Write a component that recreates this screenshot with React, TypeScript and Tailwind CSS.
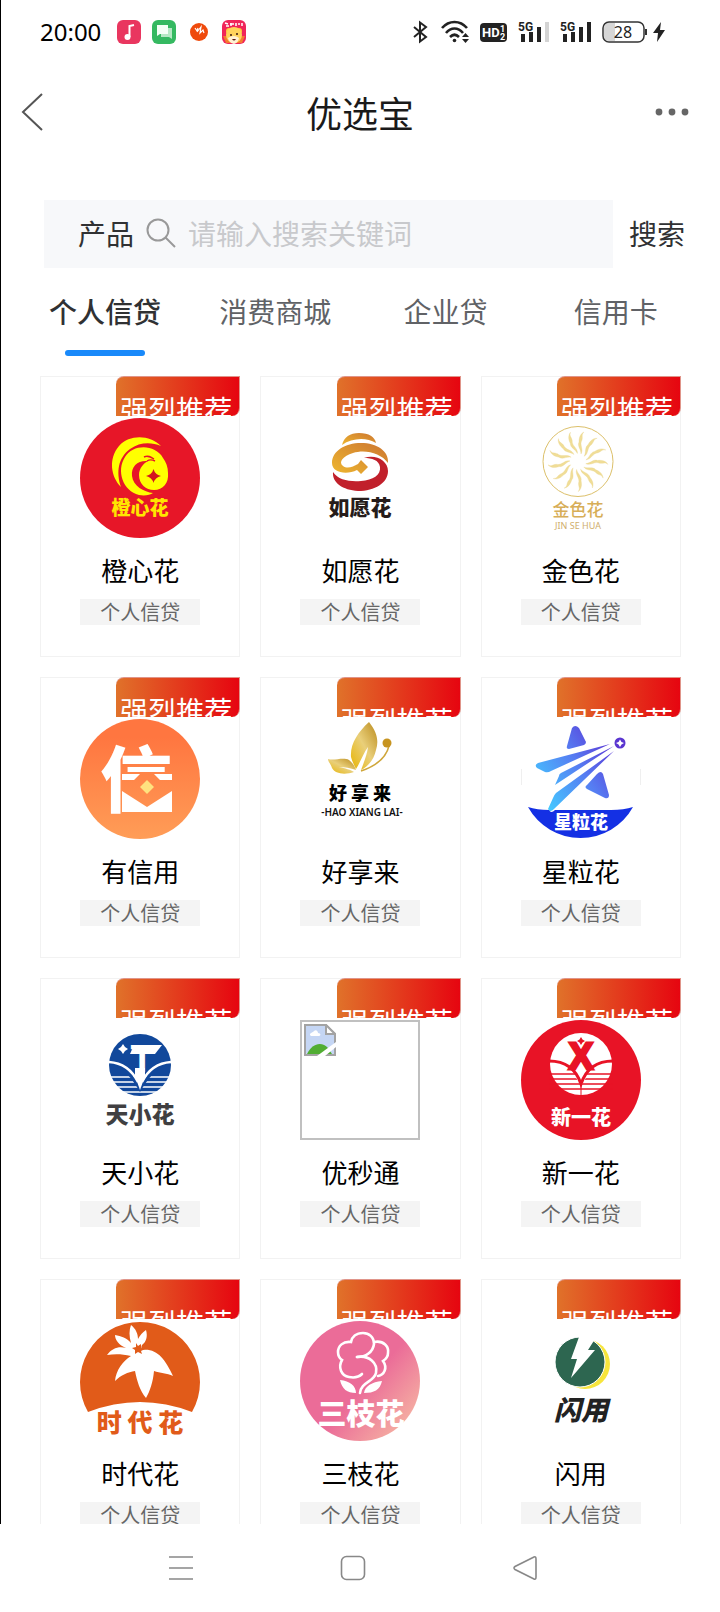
import type { ReactNode } from 'react'

const tabs = ['个人信贷', '消费商城', '企业贷', '信用卡']

const logoFont = 'font-["Noto_Sans_CJK_SC",sans-serif] font-black'

function Logo({ children }: { children: ReactNode }) {
  return (
    <svg viewBox="0 0 120 120" className="h-[120px] w-[120px]" aria-hidden="true">
      {children}
    </svg>
  )
}

function ChengxinLogo() {
  return (
    <Logo>
      <circle cx="60" cy="60" r="60" fill="#e71628" />
      <path d="M81 28C70 17 50 16 39 28C28 41 31 59 41 69C36 54 38 40 50 31C60 24 71 24 81 28Z" fill="#ff0" />
      <path d="M83 40C75 26 53 26 45 39C36 53 43 73 59 77C65 78 70 77 73 75C64 74 53 68 52 58C51 48 58 42 68 43C64 45 59 50 59 57C59 66 66 72 74 72C83 72 89 65 88 55C88 49 86 44 83 40Z" fill="#ff0" />
      <path d="M64 39C68 37 71 39 74 41M67 43C70 41 73 42 75 43" fill="none" stroke="#e71628" strokeWidth="1.4" />
      <path d="M73.500 51Q75 56.500 81 58Q75 59.500 73.500 65Q72 59.500 66 58Q72 56.500 73.500 51Z" fill="#d3161f" />
      <text x="60" y="97" textAnchor="middle" fontSize="19" fill="#ffe600" className={logoFont}>橙心花</text>
    </Logo>
  )
}

function RuyuanLogo() {
  return (
    <Logo>
      <defs>
        <linearGradient id="ruyuan-gold" x1="0" x2="1" y1="1" y2="0">
          <stop offset="0" stopColor="#eeb730" />
          <stop offset="1" stopColor="#cc7530" />
        </linearGradient>
      </defs>
      <path d="M42 27C44 19 50 15 59 15C69 15 75 19 76 25C66 19 52 20 42 27Z" fill="url(#ruyuan-gold)" />
      <path d="M88 45C81 35 65 31 53 35C43 38 38 44 43 48C47 51 53 49 58 46L61 42L68 49L61 56L57 52C47 57 32 55 32 45C32 33 45 25 61 25C77 25 89 33 88 45Z" fill="url(#ruyuan-gold)" />
      <path d="M33 54C38 62 50 64 61 63C73 62 81 57 80 49C79 42 72 40 64 40C76 36 88 43 88 53C88 65 75 73 58 73C43 72 32 65 33 54Z" fill="#c1202b" />
      <text x="60" y="97" textAnchor="middle" fontSize="21" fill="#261c1a" className={logoFont}>如愿花</text>
    </Logo>
  )
}

function JinseLogo() {
  const rays = [0, 28, 56, 84, 112, 140, 168, 196, 224, 252, 280, 308, 334]
  return (
    <Logo>
      <circle cx="57" cy="43.500" r="35" fill="none" stroke="#dcc06a" strokeWidth="1" />
      {rays.map((angle) => (
        <path
          key={angle}
          d="M60 36C63 31 58 27 61 22C62 18 60 17 63 14C59 16 58 20 58 24C56 28 60 31 60 36Z"
          transform={`rotate(${angle} 57 43.5)`}
          fill="#f0dd96"
          stroke="#e8d38c"
          strokeWidth="0.3"
        />
      ))}
      <text x="57" y="98" textAnchor="middle" fontSize="17" fill="#d7ae58" className="font-['Noto_Sans_CJK_SC',sans-serif] font-medium">金色花</text>
      <text x="57" y="111" textAnchor="middle" fontSize="9" fill="#cfae6c" className="font-['Noto_Sans',sans-serif]">JIN SE HUA</text>
    </Logo>
  )
}

function YouxinLogo() {
  return (
    <Logo>
      <defs>
        <linearGradient id="youxin" gradientUnits="userSpaceOnUse" x1="0" x2="0" y1="0" y2="120">
          <stop offset="0.15" stopColor="#ff7640" />
          <stop offset="1" stopColor="#ff9d57" />
        </linearGradient>
      </defs>
      <circle cx="60" cy="60" r="60" fill="url(#youxin)" />
      <text x="56" y="87" textAnchor="middle" fontSize="72" fill="#fff" className={logoFont}>信</text>
      <path d="M41 53H94V96H41Z" fill="url(#youxin)" />
      <path d="M42 55H60L54 61H42ZM74 55H92V61H80ZM42 72L67 88L92 72V93H42Z" fill="#fff" />
      <path d="M67 61L74 68L67 75L60 68Z" fill="#ffe27f" />
    </Logo>
  )
}

function HaoxiangLogo() {
  return (
    <Logo>
      <defs>
        <linearGradient id="haoxiang" x1="0" x2="1" y1="1" y2="0">
          <stop offset="0" stopColor="#e8b400" />
          <stop offset="0.5" stopColor="#e9cf7a" />
          <stop offset="1" stopColor="#b98a1c" />
        </linearGradient>
      </defs>
      <path d="M69 3C77 13 79 22 76 31C74 40 69 47 61 51C64 43 67 36 68 28C63 35 60 44 56 50C54 46 52 42 51 38C50 25 58 13 69 3Z" fill="url(#haoxiang)" />
      <path d="M28 40C34 42 43 38 49 41C53 44 55 48 56 51C51 49 44 48 39 48C45 49 51 51 54 53C45 56 35 55 32 49C31 45 28 43 28 40Z" fill="url(#haoxiang)" />
      <path d="M89 27C86 39 76 47 61 52" fill="none" stroke="#cfa63a" strokeWidth="1.5" />
      <circle cx="87" cy="24" r="4.500" fill="#c79420" />
      <text x="60" y="81" textAnchor="middle" fontSize="18" fill="#000" className={logoFont}>好 享 来</text>
      <text x="62" y="97" textAnchor="middle" fontSize="10" fill="#111" className="font-['Noto_Sans',sans-serif] font-semibold">-HAO XIANG LAI-</text>
    </Logo>
  )
}

function XingliLogo() {
  return (
    <Logo>
      <defs>
        <linearGradient id="xingli" gradientUnits="userSpaceOnUse" x1="18" x2="92" y1="75" y2="25">
          <stop offset="0" stopColor="#45c8ff" />
          <stop offset="0.55" stopColor="#567cf2" />
          <stop offset="1" stopColor="#5b35d4" />
        </linearGradient>
      </defs>
      <path d="M0.500 50V66M119.500 50V66" stroke="#e4e4e4" strokeWidth="0.6" />
      <g fill="url(#xingli)">
        <path d="M51 9Q54 5 58 9L65 23Q65 25 63 26L48 30Q45 30 46 27Z" />
        <path d="M89 25L17 44Q13 46 16 49L24 53Q27 54 30 52Z" />
        <path d="M93 27L40 54Q38 55 38 57L34 66Z" />
        <path d="M93 32L35 74Q33 76 32 79L27 90Q29 94 33 90Z" />
        <path d="M76 55Q80 51 82 55L88 76Q88 80 84 79L66 70Q63 68 66 66Z" />
      </g>
      <circle cx="99" cy="24" r="5.500" fill="#5a35d0" />
      <path d="M99 20.500L100.500 23L103 24L100.500 25.500L99 28L97.500 25.500L95 24L97.500 23Z" fill="#fff" />
      <path d="M7 88Q16 91 28 91Q30 95 34 91H90Q103 91 112 88A60 60 0 0 1 7 88Z" fill="#1430e4" />
      <text x="60" y="110" textAnchor="middle" fontSize="18" fill="#fff" className={logoFont}>星粒花</text>
    </Logo>
  )
}

function TianxiaoLogo() {
  return (
    <Logo>
      <circle cx="60" cy="45" r="31" fill="#11489b" />
      <path d="M28 57H92M28 62H92M28 67H92M28 72H92" stroke="#fff" strokeWidth="1.600" />
      <path d="M29 43C43 44 52 52 60 66C68 52 77 44 91 43C77 47 68 58 60 72C52 58 43 47 29 43Z" fill="#11489b" />
      <path d="M29 42C43 43 52 50 58 62M91 42C77 43 68 50 62 62" fill="none" stroke="#fff" strokeWidth="2.600" />
      <path d="M55 48H65V56L60 70L55 56Z" fill="#fff" />
      <path d="M54 25H82L75 34H50Z" fill="#fff" />
      <text x="62" y="52" textAnchor="middle" fontSize="38" fill="#fff" className="font-['Liberation_Sans',sans-serif] font-bold">T</text>
      <path d="M43 24L45 27L48 29L45 31L43 34L41 31L38 29L41 27Z" fill="#fff" />
      <text x="60" y="103" textAnchor="middle" fontSize="23" fill="#403f41" className={logoFont}>天小花</text>
    </Logo>
  )
}

function XinyiLogo() {
  return (
    <Logo>
      <circle cx="60" cy="60" r="60" fill="#e81326" />
      <circle cx="60" cy="44" r="31" fill="#fff" />
      <text x="60" y="49" textAnchor="middle" fontSize="36" fill="#e81326" stroke="#e81326" strokeWidth="3" className="font-['Liberation_Sans',sans-serif] font-bold">X</text>
      <path d="M28 54H92M28 59H92M28 64H92M28 69H92" stroke="#e81326" strokeWidth="1.600" />
      <path d="M54 56L60 46L66 56L60 66Z" fill="#fff" />
      <path d="M28 41C44 41 55 49 60 64C65 49 76 41 92 41" fill="none" stroke="#e81326" strokeWidth="3" />
      <path d="M60 62V76" stroke="#e81326" strokeWidth="1" />
      <path d="M60 17L61.500 19.500L64 21L61.500 22.500L60 25L58.500 22.500L56 21L58.500 19.500Z" fill="#e81326" />
      <text x="60" y="105" textAnchor="middle" fontSize="20" fill="#fff" className={logoFont}>新一花</text>
    </Logo>
  )
}

function ShidaiLogo() {
  return (
    <Logo>
      <path d="M8 91A60 60 0 1 1 112 91Q60 71 8 91Z" fill="#e15b19" />
      <path d="M51 4C56 8 58 13 58 18C60 14 63 11 66 9C68 16 66 21 62 24C61 26 61 28 62 29C77 27 85 38 93 55C87 52 80 52 74 50C73 61 70 70 66 77C60 70 57 60 55 50C48 51 41 54 35 60C36 49 43 40 51 35C42 33 35 33 27 34C32 27 39 25 46 27C39 24 35 19 35 14C41 15 47 17 51 22C49 15 49 9 51 4Z" fill="#fff" />
      <path d="M56 22L58 25L61 23L61 27L65 28L61 30L62 33L58 31L55 33L55 29L52 27L56 26Z" fill="#e15b19" />
      <text x="60" y="111" textAnchor="middle" fontSize="25" fill="#e15b19" className={logoFont}>时 代 花</text>
    </Logo>
  )
}

function SanzhiLogo() {
  return (
    <Logo>
      <defs>
        <linearGradient id="sanzhi" x1="0.2" x2="1" y1="0.2" y2="0.9">
          <stop offset="0.45" stopColor="#eb6c98" />
          <stop offset="1" stopColor="#f7bda4" />
        </linearGradient>
      </defs>
      <circle cx="60" cy="60" r="60" fill="url(#sanzhi)" />
      <g fill="none" stroke="#fff" strokeWidth="2.600" strokeLinecap="round">
        <path d="M57 36C66 36 73 31 74 23C74 16 69 12 63 12C56 12 52 16 51 21C43 20 38 25 38 31C38 35 39 37 42 39C38 46 41 55 49 56C54 57 59 56 62 53" />
        <path d="M74 21C84 19 89 26 88 32C88 36 86 38 83 40C88 47 84 54 78 55" />
        <path d="M57 36C69 34 78 42 76 52C74 61 61 61 60 72" />
      </g>
      <path d="M40 59C50 60 56 65 56 72C47 72 42 68 40 59ZM82 60C72 61 65 65 64 72C74 72 80 69 82 60Z" fill="#fff" />
      <text x="61" y="104" textAnchor="middle" fontSize="29" fill="#fff" className={logoFont}>三枝花</text>
    </Logo>
  )
}

function ShanyongLogo() {
  return (
    <Logo>
      <circle cx="64" cy="43" r="25" fill="#f7e53c" />
      <circle cx="59" cy="41" r="25" fill="#2d6650" stroke="#fff" strokeWidth="1" />
      <path d="M63 15L74 18L67 29H74L50 57L56 38H50L58 16Z" fill="#fff" />
      <text x="60" y="99" textAnchor="middle" fontSize="27" fontStyle="italic" fill="#222" className={logoFont}>闪用</text>
    </Logo>
  )
}

function MissingLogo() {
  return (
    <div className="h-[120px] w-[120px] border-2 border-[#c0c0c0] p-0.5">
      <svg viewBox="0 0 32 32" className="h-8 w-8" aria-hidden="true">
        <path d="M1 1H22L31 10V31H1Z" fill="#c5d6f4" stroke="#a3a3a3" strokeWidth="2" />
        <path d="M6 11C6 8 9 9 10 7C12 5 14 7 14 9C17 9 17 12 15 12H7Z" fill="#fff" />
        <path d="M3 30C8 19 18 17 24 24L28 30Z" fill="#51ad33" />
        <path d="M22 1V10H31Z" fill="#fff" stroke="#a3a3a3" strokeWidth="2" />
        <path d="M32 18L13 32H21L32 23Z" fill="#fff" />
      </svg>
    </div>
  )
}

const products = [
  { name: '橙心花', logo: <ChengxinLogo />, badge: 'leading-[64px]' },
  { name: '如愿花', logo: <RuyuanLogo />, badge: 'leading-[64px]' },
  { name: '金色花', logo: <JinseLogo />, badge: 'leading-[64px]' },
  { name: '有信用', logo: <YouxinLogo />, badge: 'leading-[64px]' },
  { name: '好享来', logo: <HaoxiangLogo />, badge: 'leading-[84px]' },
  { name: '星粒花', logo: <XingliLogo />, badge: 'leading-[84px]' },
  { name: '天小花', logo: <TianxiaoLogo />, badge: 'leading-[84px]' },
  { name: '优秒通', logo: <MissingLogo />, badge: 'leading-[84px]' },
  { name: '新一花', logo: <XinyiLogo />, badge: 'leading-[84px]' },
  { name: '时代花', logo: <ShidaiLogo />, badge: 'leading-[84px]' },
  { name: '三枝花', logo: <SanzhiLogo />, badge: 'leading-[84px]' },
  { name: '闪用', logo: <ShanyongLogo />, badge: 'leading-[84px]' },
]

function Signal({ last }: { last: string }) {
  return (
    <svg viewBox="0 0 32 24" className="h-6 w-8">
      <text x="0" y="11" fontSize="12" fill="#222" className="font-['Roboto',sans-serif] font-bold">5G</text>
      <path d="M3 14H7V22H3ZM11 12H15V22H11ZM19 7H23V22H19Z" fill="#222" />
      <path d="M27 2H31V22H27Z" fill={last} />
    </svg>
  )
}

function StatusBar() {
  return (
    <div className="flex h-16 items-center justify-between pl-[39px] pr-[54px]">
      <div className="flex items-center">
        <span className="font-['Noto_Sans',sans-serif] text-2xl text-black">20:00</span>
        <svg viewBox="0 0 24 24" className="ml-4 h-6 w-6">
          <rect width="24" height="24" rx="6" fill="#e9365f" />
          <path d="M12.500 17V6L17 5" fill="none" stroke="#fff" strokeWidth="2" />
          <circle cx="10.500" cy="17" r="3" fill="#fff" />
        </svg>
        <svg viewBox="0 0 24 24" className="ml-[11px] h-6 w-6">
          <rect width="24" height="24" rx="6" fill="#35b961" />
          <path d="M11 8H20V19L17 17H9V14Z" fill="#b5e8c4" />
          <path d="M5 5H16V14H8L5 16Z" fill="#f4fff6" />
        </svg>
        <svg viewBox="0 0 18 18" className="ml-[14px] h-[18px] w-[18px]">
          <circle cx="9" cy="9" r="9" fill="#ef4a0c" />
          <path d="M5 5L7 8L8 5M7 9L11 4L10 10L13 7L14 10" fill="none" stroke="#fff" strokeWidth="1.200" />
        </svg>
        <svg viewBox="0 0 24 24" className="ml-[14px] h-6 w-6">
          <rect width="24" height="24" rx="6" fill="#f0255a" />
          <path d="M3 3L6 4M4 6H7M9 3V6M8 4H12M14 3V6M16 4H18M20 3V6" stroke="#fff" strokeWidth="1.500" />
          <path d="M1 16L4 23H20L23 16Z" fill="#f47a30" />
          <circle cx="7" cy="11" r="3" fill="#ffc53a" />
          <circle cx="17" cy="11" r="3" fill="#ffc53a" />
          <circle cx="12" cy="15" r="8" fill="#ffd45c" />
          <path d="M6 18Q12 14 17 18Q16 23 12 24Q7 23 6 18Z" fill="#fff3d6" />
          <circle cx="9" cy="15" r="1" fill="#3a1a10" />
          <circle cx="15" cy="14" r="1" fill="#3a1a10" />
          <path d="M10 19Q12 22 14 19Z" fill="#5b1c12" />
        </svg>
      </div>

      <div className="flex items-center">
        <svg viewBox="0 0 16 24" className="h-6 w-4" fill="none" stroke="#222" strokeWidth="2">
          <path d="M2 7L14 17L8 21.500V2.500L14 7L2 17" />
        </svg>
        <svg viewBox="0 0 30 24" className="ml-3 h-6 w-[30px]" fill="none" stroke="#222" strokeWidth="2.600">
          <path d="M2 8C9 0 20 0 27 8M6 13C11 7 18 7 23 13M10 17C13 14 16 14 19 17" />
          <circle cx="14.500" cy="20.500" r="1.800" fill="#222" stroke="none" />
          <path d="M22 17L25.500 13L29 17ZM22 19H29L25.500 23Z" fill="#222" stroke="none" />
        </svg>
        <svg viewBox="0 0 28 20" className="ml-2.5 h-5 w-7">
          <rect width="27" height="19" y="1" rx="4" fill="#222" />
          <text x="2" y="15" fontSize="13" fill="#fff" className="font-['Roboto',sans-serif] font-bold">HD</text>
          <text x="20" y="10" fontSize="9" fill="#fff" className="font-['Roboto',sans-serif] font-bold">1</text>
          <text x="20" y="18" fontSize="9" fill="#fff" className="font-['Roboto',sans-serif] font-bold">2</text>
        </svg>
        <div className="ml-2.5 flex gap-2.5">
          <Signal last="#d4d4d4" />
          <Signal last="#222" />
        </div>
        <svg viewBox="0 0 46 22" className="ml-2.5 h-[22px] w-[46px]">
          <path d="M7 2H13V20H7Q2 20 2 15V7Q2 2 7 2Z" fill="#d6d6d6" />
          <rect x="1" y="1" width="41" height="20" rx="6" fill="none" stroke="#333" strokeWidth="1.500" />
          <path d="M44 8V14" stroke="#333" strokeWidth="2" />
          <text x="21" y="17" textAnchor="middle" fontSize="16" fill="#222" className="font-['Noto_Sans',sans-serif]">28</text>
        </svg>
        <svg viewBox="0 0 14 20" className="ml-1 h-5 w-3.5">
          <path d="M9 0L1 11H6L5 20L13 8H8Z" fill="#222" />
        </svg>
      </div>
    </div>
  )
}

export default function App() {
  return (
    <div className="flex h-screen flex-col bg-white font-['Noto_Sans_CJK_SC',sans-serif]">
      <div className="min-h-0 flex-1 overflow-hidden border-l border-black">
        <StatusBar />

        {/* Title bar */}
        <header className="flex h-24 items-center justify-between pl-5 pr-[31px]">
          <button type="button" aria-label="返回" className="w-11">
            <svg viewBox="0 0 22 38" className="h-[38px] w-[22px]" fill="none" stroke="#555" strokeWidth="2">
              <path d="M21 1L2 19L21 37" />
            </svg>
          </button>
          <h1 className="text-4xl text-[#1a1a1a]">优选宝</h1>
          <button type="button" aria-label="更多">
            <svg viewBox="0 0 34 8" className="h-2 w-[34px]" fill="#666">
              <circle cx="4" cy="4" r="3.400" />
              <circle cx="17" cy="4" r="3.400" />
              <circle cx="30" cy="4" r="3.400" />
            </svg>
          </button>
        </header>

        {/* Search */}
        <form className="mt-10 flex items-center pl-[43px] pr-[35px]">
          <div className="flex h-[68px] flex-1 items-center bg-[#f7f8fa] pb-0.5 pl-[34px]">
            <label htmlFor="keyword" className="flex items-center gap-3 text-[28px] text-[#303133]">
              产品
              <svg viewBox="0 0 30 30" className="h-[30px] w-[30px]" fill="none" stroke="#999" strokeWidth="2">
                <circle cx="12" cy="12" r="10.500" />
                <path d="M19.500 19.500L29 29" />
              </svg>
            </label>
            <input
              id="keyword"
              type="text"
              placeholder="请输入搜索关键词"
              className="ml-3 h-full min-w-0 flex-1 bg-transparent text-[28px] outline-none placeholder:text-[#c8c9cc]"
            />
          </div>
          <button type="submit" className="ml-4 pb-0.5 text-[28px] text-[#303133]">搜索</button>
        </form>

        {/* Tabs */}
        <div role="tablist" className="mt-4 grid grid-cols-4 px-[19px]">
          {tabs.map((tab, i) => (
            <button
              key={tab}
              type="button"
              role="tab"
              aria-selected={i === 0}
              className={
                i === 0
                  ? 'flex flex-col items-center gap-3 text-[28px] leading-[54px] font-medium text-[#303133]'
                  : 'flex flex-col items-center gap-3 text-[28px] leading-[54px] text-[#606266]'
              }
            >
              {tab}
              {i === 0 && <span className="h-1.5 w-20 rounded-full bg-[#1989fa]" />}
            </button>
          ))}
        </div>

        {/* Products */}
        <ul className="mt-5 grid grid-cols-3 gap-5 pl-[39px] pr-[39px]">
          {products.map((product) => (
            <li key={product.name}>
              <a href="#" className="relative flex h-[281px] flex-col items-center border border-[#f2f2f2] pt-[41px]">
                <span
                  className={`absolute -top-px -right-px h-10 w-[124px] overflow-hidden rounded-tl-lg rounded-br-lg border-t border-r border-[#e0958a] bg-linear-to-r/srgb from-[#e0722a] to-[#e60510] pl-1 text-[28px] whitespace-nowrap text-white ${product.badge}`}
                >
                  强烈推荐
                </span>
                <span className="relative">{product.logo}</span>
                <h2 className="mt-[14px] text-[26px] leading-9 text-black">{product.name}</h2>
                <span className="mt-[11px] w-[120px] bg-[#f4f4f4] text-center text-xl leading-[26px] text-[#666]">
                  个人信贷
                </span>
              </a>
            </li>
          ))}
        </ul>
      </div>

      {/* System navigation */}
      <nav className="flex h-[88px] shrink-0 items-center justify-center gap-[146px] pr-[14px]">
        <button type="button" aria-label="菜单">
          <svg viewBox="0 0 26 26" className="h-[26px] w-[26px]" stroke="#888" strokeWidth="1.600">
            <path d="M1 2H25M1 13H25M1 24H25" />
          </svg>
        </button>
        <button type="button" aria-label="主屏幕">
          <svg viewBox="0 0 26 26" className="h-[26px] w-[26px]" fill="none" stroke="#888" strokeWidth="1.600">
            <rect x="1.500" y="1.500" width="23" height="23" rx="5" />
          </svg>
        </button>
        <button type="button" aria-label="后退">
          <svg viewBox="0 0 26 26" className="h-[26px] w-[26px]" fill="none" stroke="#888" strokeWidth="1.600">
            <path d="M22 2Q24 1 24 4V22Q24 25 22 24L3 14.500Q1 13 3 11.500Z" />
          </svg>
        </button>
      </nav>
    </div>
  )
}
